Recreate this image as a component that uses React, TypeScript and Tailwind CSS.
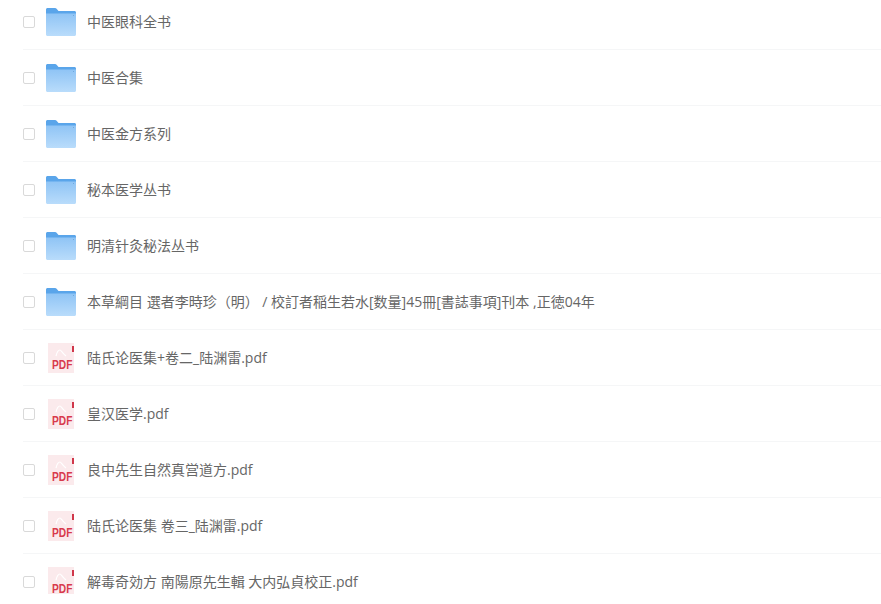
const files = [
  { name: "中医眼科全书", type: "folder" },
  { name: "中医合集", type: "folder" },
  { name: "中医金方系列", type: "folder" },
  { name: "秘本医学丛书", type: "folder" },
  { name: "明清针灸秘法丛书", type: "folder" },
  { name: "本草綱目 選者李時珍（明） / 校訂者稲生若水[数量]45冊[書誌事項]刊本 ,正徳04年", type: "folder" },
  { name: "陆氏论医集+卷二_陆渊雷.pdf", type: "pdf" },
  { name: "皇汉医学.pdf", type: "pdf" },
  { name: "良中先生自然真営道方.pdf", type: "pdf" },
  { name: "陆氏论医集 卷三_陆渊雷.pdf", type: "pdf" },
  { name: "解毒奇効方 南陽原先生輯 大内弘貞校正.pdf", type: "pdf" },
];

function FolderIcon() {
  return (
    <svg width="30" height="28" viewBox="0 0 30 28" className="shrink-0">
      <defs>
        <linearGradient id="folderFront" x1="0" y1="0" x2="0" y2="1">
          <stop offset="0" stopColor="#8fc4f5" />
          <stop offset="1" stopColor="#b9dcfb" />
        </linearGradient>
      </defs>
      <path d="M0 1.5C0 .7.7 0 1.500 0h7.500c.8 0 1.300.3 1.800.9L12.500 3H28.500c.8 0 1.500.7 1.500 1.500V8H0z" fill="#5aa5ea" />
      <path d="M0 5.500h30v21c0 .8-.7 1.500-1.500 1.500h-27C.7 28 0 27.300 0 26.500z" fill="url(#folderFront)" />
      <rect x="27" y="7" width="1" height="1" fill="#6fa9dc" />
    </svg>
  );
}

function PdfIcon() {
  return (
    <div className="relative h-[30px] w-[26px] shrink-0 bg-[#fbeaec]">
      <svg width="26" height="30" viewBox="0 0 26 30" className="absolute inset-0">
        <path d="M8 13c1-4 3-6 4-6s2 3 6 6" fill="none" stroke="#ffffff" strokeWidth="1.200" />
        <rect x="24" y="3" width="2" height="6" fill="#d0374a" />
      </svg>
      <span className="absolute bottom-[2px] left-[4px] text-[12px] leading-[12px] font-bold text-[#d83a4c] [font-family:'Liberation_Sans',sans-serif] [transform:scaleX(0.85)] origin-left">
        PDF
      </span>
    </div>
  );
}

function Row({ name, type }: { name: string; type: string }) {
  return (
    <div className="ml-[23px] flex h-[56px] items-center border-b border-[#f5f6f7]">
      <div className="h-[12px] w-[12px] shrink-0 rounded-[2px] border border-[#d9d9d9] bg-white" />
      <div className="ml-[11px] flex w-[41px] shrink-0 items-center">
        {type === "folder" ? <FolderIcon /> : <div className="ml-[2px]"><PdfIcon /></div>}
      </div>
      <span className="text-[14px] whitespace-nowrap text-[#666666]">{name}</span>
    </div>
  );
}

export default function App() {
  return (
    <div className="h-[604px] w-[881px] overflow-hidden bg-white [font-family:'Open_Sans','Noto_Sans_CJK_SC',sans-serif]">
      <div className="-mt-[6px] h-[600px] overflow-hidden">
        {files.map((file) => (
          <Row key={file.name} name={file.name} type={file.type} />
        ))}
      </div>
    </div>
  );
}
